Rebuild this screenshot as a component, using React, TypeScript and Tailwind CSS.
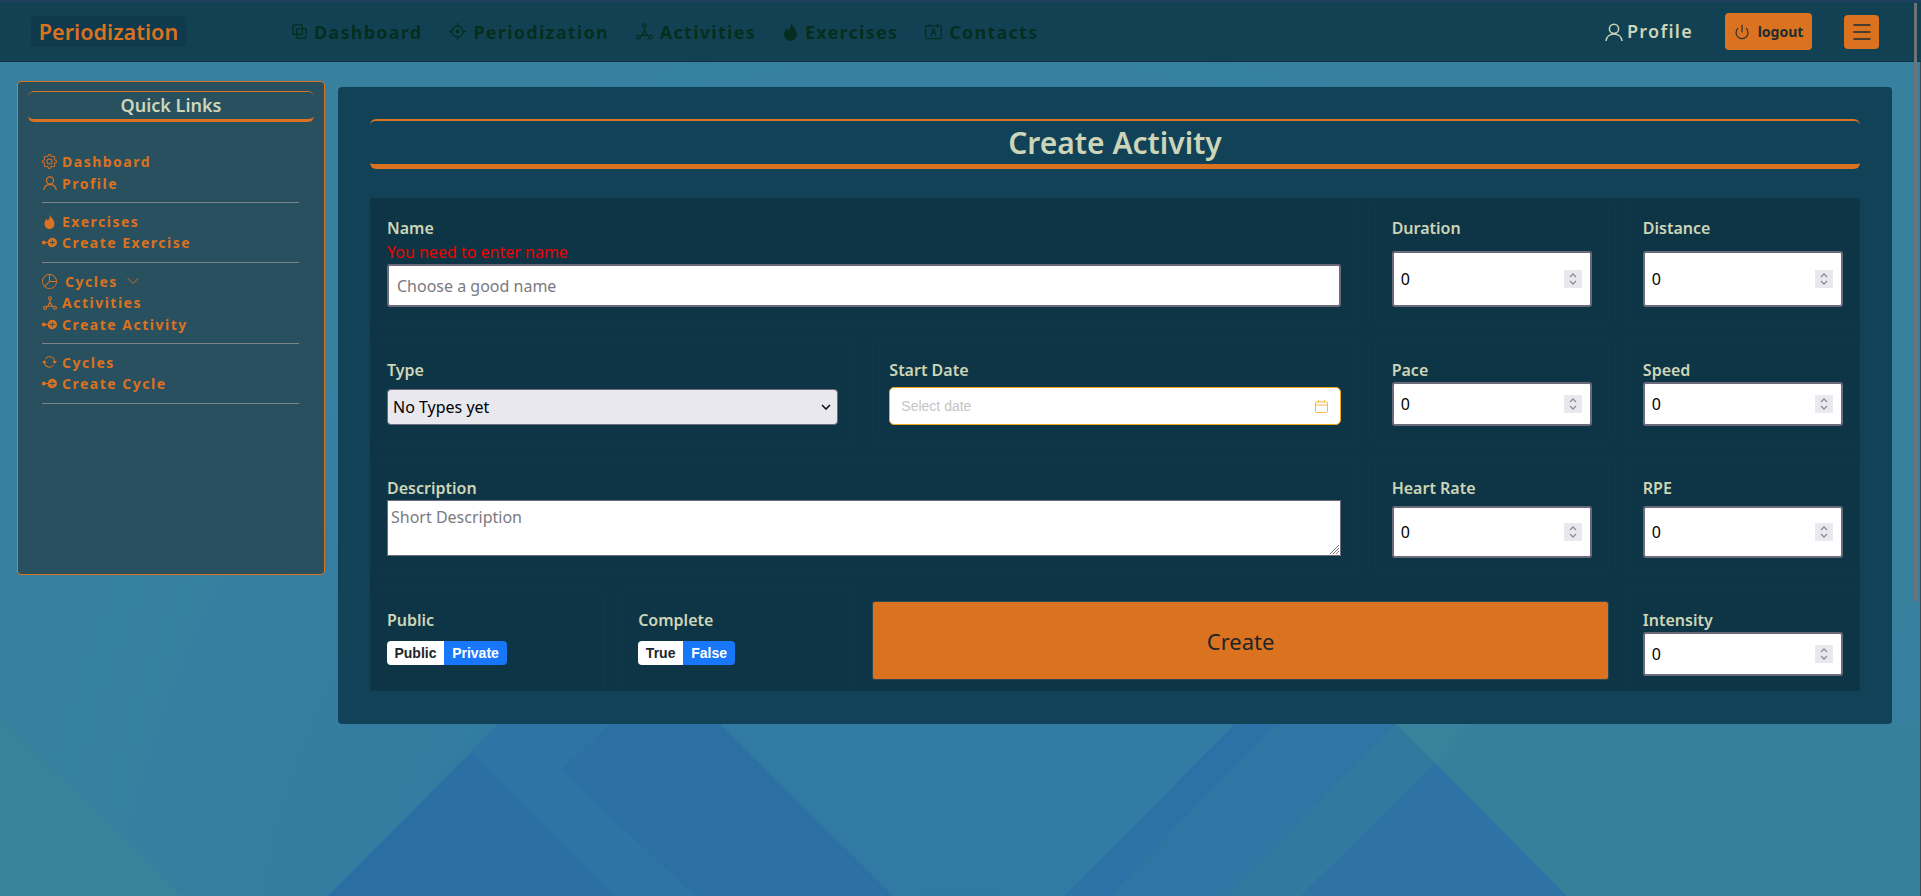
import { ChevronDown, Menu, Power } from "lucide-react";
import type { ReactNode } from "react";
import { BsArrowRepeat, BsGear, BsNodePlusFill, BsPieChart } from "react-icons/bs";

const font = "font-['Noto_Sans','Open_Sans',sans-serif]";

function SquaresIcon() {
  return (
    <svg width="15" height="15" viewBox="0 0 16 16" fill="none" stroke="currentColor" strokeWidth="1.4">
      <rect x="1" y="1" width="10" height="10" rx="1" />
      <rect x="5" y="5" width="10" height="10" rx="1" />
    </svg>
  );
}

function CrosshairIcon() {
  return (
    <svg width="17" height="17" viewBox="0 0 16 16" fill="none" stroke="currentColor" strokeWidth="1.2">
      <circle cx="8" cy="8" r="5.2" />
      <circle cx="8" cy="8" r="1.8" fill="currentColor" stroke="none" />
      <path d="M8 0 V3 M8 13 V16 M0 8 H3 M13 8 H16" />
    </svg>
  );
}

function NodesIcon({ size = 17 }: { size?: number }) {
  return (
    <svg width={size} height={size} viewBox="0 0 16 16" fill="none" stroke="currentColor" strokeWidth="1.2">
      <circle cx="8" cy="2.5" r="1.7" />
      <circle cx="2.4" cy="13.4" r="1.7" />
      <circle cx="13.6" cy="13.4" r="1.7" />
      <path d="M8 4.2 V7 M8 7 L5.4 11.6 H10.6 Z M5.4 11.6 L3.9 12.6 M10.6 11.6 L12.1 12.6" />
    </svg>
  );
}

function FlameIcon({ width = 15, height = 19 }: { width?: number; height?: number }) {
  return (
    <svg width={width} height={height} viewBox="2.6 0 10.8 16" fill="currentColor">
      <path d="M8.4 0 C8.6 3 13.4 6 13.4 10.5 A5.4 5.5 0 0 1 2.6 10.5 C2.6 8.2 3.9 6.6 4.6 5 C5.4 5.7 6 6.6 6.2 7.2 C7.6 5.4 8.9 3 8.4 0 Z" />
    </svg>
  );
}

function ContactCardIcon() {
  return (
    <svg width="17" height="17" viewBox="0 0 17 17" fill="none" stroke="currentColor" strokeWidth="1.2">
      <rect x="0.8" y="3" width="15.4" height="12.6" />
      <path d="M4.5 1 V4.5 M12.5 1 V4.5" />
      <circle cx="8.5" cy="7.6" r="1.4" />
      <path d="M5.8 13.4 L7.4 9.6 H9.6 L11.2 13.4" />
    </svg>
  );
}

function PersonIcon({ size }: { size: number }) {
  return (
    <svg width={size} height={size} viewBox="0 0 18 18" fill="none" stroke="currentColor" strokeWidth="1.5">
      <circle cx="9" cy="5.8" r="4.6" />
      <path d="M1 18 C1.5 13.4 5 11 9 11 C13 11 16.5 13.4 17 18" />
    </svg>
  );
}

function NavLink({ icon, label }: { icon: ReactNode; label: string }) {
  return (
    <a className="flex items-center gap-[7px] text-[18px] font-bold leading-[24px] tracking-[1.25px] text-[#042f1e]">
      {icon}
      {label}
    </a>
  );
}

function SideLink({ icon, label }: { icon: ReactNode; label: string }) {
  return (
    <a className="flex h-[21.4px] items-center gap-[5px] text-[14px] font-bold tracking-[1.5px] text-[#db7220]">
      <span className="flex w-[15px] justify-center">{icon}</span>
      {label}
    </a>
  );
}

function Divider() {
  return <hr className="my-[8px] border-0 border-t-[1px] border-[#7d8588]" />;
}

function TitleBar({ children, className }: { children: ReactNode; className?: string }) {
  return (
    <div className={`rounded-[6px] border-x-0 border-solid border-[#db7220] text-center font-semibold text-[#cdd5b8] ${className ?? ""}`}>
      {children}
    </div>
  );
}

function Cell({ span, children }: { span: string; children: ReactNode }) {
  return <div className={`rounded-[3px] border border-[#0f3849] px-[16px] ${span}`}>{children}</div>;
}

function Label({ children, className }: { children: ReactNode; className?: string }) {
  return <label className={`block text-[16px] font-semibold leading-[24px] text-[#cdd5b8] ${className ?? ""}`}>{children}</label>;
}

function NumberBox({ h, className }: { h: string; className?: string }) {
  return (
    <div className={`flex items-center justify-between rounded-[3px] border-2 border-[#6b6b7c] bg-white pl-[7px] pr-[8px] ${h} ${className ?? ""}`}>
      <span className="text-[16px] text-black">0</span>
      <span className="flex h-[18px] w-[18px] flex-col items-center justify-center bg-[#e8e8ee]">
        <svg width="10" height="14" viewBox="0 0 10 14" fill="none" stroke="#8b8b96" strokeWidth="1.3">
          <path d="M2 5 L5 2 L8 5" />
          <path d="M2 9 L5 12 L8 9" />
        </svg>
      </span>
    </div>
  );
}

export default function App() {
  return (
    <div className={`relative h-[896px] w-[1921px] overflow-hidden bg-[radial-gradient(ellipse_at_50%_115%,#3079a4_0%,#337ca1_40%,#37819f_75%)] ${font}`}>
      {/* background shapes */}
      <svg className="absolute inset-0" width="1921" height="896" viewBox="0 0 1921 896">
        <polygon points="0,717 182,896 0,896" fill="#38829b" />
        <polygon points="608,612 893,896 328,896" fill="#2e74a4" />
        <polygon points="561,770 610,724 720,724 893,896 695,896" fill="#2c70a4" />
        <polygon points="472,753 615,896 328,896" fill="#2b6ea3" />
        <polygon points="1235,724 1396,724 1226,896 1065,896" fill="#2f76a4" />
        <polygon points="1235,724 1276,724 1109,896 1065,896" fill="#2d72a6" />
        <polygon points="1396,724 1470,724 1921,724 1921,896 1567,896" fill="#37809c" />
        <polygon points="1396,724 1470,724 1435,763" fill="#38829b" />
        <polygon points="1435,763 1567,896 1300,896" fill="#2e73a3" />
        <polygon points="1396,724 1435,763 1300,896 1226,896" fill="#32799f" />
      </svg>

      <div className="relative flex h-full flex-col">
        <nav className="flex h-[62px] items-center border-t-[2px] border-b-[1px] border-t-[#1e3f5f] border-b-[#0e3344] bg-[#134154] pl-[31px] pr-[42px]">
          <a className="flex h-[31px] w-[155px] items-center justify-center rounded-[4px] bg-[#0f3a4e] text-[21.6px] font-semibold leading-none text-[#db7220]">
            Periodization
          </a>
          <div className="ml-[106px] flex items-center gap-[27px]">
            <NavLink icon={<SquaresIcon />} label="Dashboard" />
            <NavLink icon={<CrosshairIcon />} label="Periodization" />
            <NavLink icon={<NodesIcon />} label="Activities" />
            <NavLink icon={<FlameIcon />} label="Exercises" />
            <NavLink icon={<ContactCardIcon />} label="Contacts" />
          </div>
          <div className="ml-auto flex items-center">
            <a className="flex items-center gap-[4px] text-[18px] font-semibold tracking-[1.3px] text-[#cdd5b8]">
              <PersonIcon size={18} />
              Profile
            </a>
            <button className="ml-[32px] flex h-[37px] w-[87px] items-center justify-center gap-[8px] rounded-[4px] bg-[#db7220] text-[14px] font-bold text-[#1c2d30]">
              <Power className="h-[16px] w-[16px]" strokeWidth={1.6} />
              logout
            </button>
            <button className="ml-[32px] flex h-[34px] w-[35px] items-center justify-center rounded-[4px] bg-[#db7220] text-[#1c2d30]">
              <Menu className="h-[24px] w-[24px]" strokeWidth={1.5} />
            </button>
          </div>
        </nav>

        <div className="flex items-start gap-[13px] pl-[17px] pt-[19px]">
          <aside className="h-[494px] w-[308px] rounded-[4px] border border-[#db7220] bg-[#29505f] px-[10px] pt-[9px]">
            <TitleBar className="flex h-[31px] items-center justify-center border-t-[1px] border-b-[3px] text-[18px]">
              Quick Links
            </TitleBar>
            <div className="pl-[14px] pr-[15px] pt-[29px]">
              <SideLink icon={<BsGear className="h-[15px] w-[15px]" />} label="Dashboard" />
              <SideLink icon={<PersonIcon size={14} />} label="Profile" />
              <Divider />
              <SideLink icon={<FlameIcon width={13} height={15} />} label="Exercises" />
              <SideLink icon={<BsNodePlusFill className="h-[15px] w-[15px]" />} label="Create Exercise" />
              <Divider />
              <div className="flex h-[21.4px] items-center text-[14px] font-bold tracking-[1.5px] text-[#db7220]">
                <span className="flex w-[15px] justify-center">
                  <BsPieChart className="h-[15px] w-[15px]" />
                </span>
                <span className="ml-[8px]">Cycles</span>
                <ChevronDown className="ml-[5px] h-[20px] w-[20px]" strokeWidth={1.1} />
              </div>
              <SideLink icon={<NodesIcon size={14} />} label="Activities" />
              <SideLink icon={<BsNodePlusFill className="h-[15px] w-[15px]" />} label="Create Activity" />
              <Divider />
              <SideLink icon={<BsArrowRepeat className="h-[16px] w-[16px]" />} label="Cycles" />
              <SideLink icon={<BsNodePlusFill className="h-[15px] w-[15px]" />} label="Create Cycle" />
              <Divider />
            </div>
          </aside>

          <main className="mt-[6px] h-[637px] w-[1554px] rounded-[4px] bg-[#114257] px-[32px] pt-[32px]">
            <TitleBar className="flex h-[50px] items-center justify-center border-t-[2px] border-b-[5px] text-[30px]">
              Create Activity
            </TitleBar>

            <form className="mt-[29px] grid h-[493px] grid-cols-12 grid-rows-[125px_101px_115px_101px] gap-x-[17px] gap-y-[17px] bg-[#0e3545]">
              <Cell span="col-span-8">
                <Label className="pt-[17px]">Name</Label>
                <div className="text-[16px] leading-[24px] text-[#f00000]">You need to enter name</div>
                <div className="flex h-[43px] items-center rounded-[3px] border-2 border-[#6b6b7c] bg-white pl-[8px] text-[16px] text-[#7a7a80]">
                  Choose a good name
                </div>
              </Cell>
              <Cell span="col-span-2">
                <Label className="pt-[17px]">Duration</Label>
                <NumberBox h="h-[56px]" className="mt-[11px]" />
              </Cell>
              <Cell span="col-span-2">
                <Label className="pt-[17px]">Distance</Label>
                <NumberBox h="h-[56px]" className="mt-[11px]" />
              </Cell>

              <Cell span="col-span-4">
                <Label className="pt-[17px]">Type</Label>
                <div className="mt-[7px] flex h-[36px] items-center justify-between rounded-[4px] border border-[#6b6b7c] bg-[#e8e8ee] pl-[5px] pr-[6px] text-[16px] text-black">
                  No Types yet
                  <svg width="10" height="6" viewBox="0 0 10 6" fill="none" stroke="#111" strokeWidth="1.6">
                    <path d="M1 1 L5 5 L9 1" />
                  </svg>
                </div>
              </Cell>
              <Cell span="col-span-4">
                <Label className="pt-[17px]">Start Date</Label>
                <div className="mt-[5px] flex h-[38px] items-center justify-between rounded-[5px] border border-[#f0a818] bg-white pl-[11px] pr-[12px] font-['Liberation_Sans',sans-serif] text-[14px] text-[#c4c4c4]">
                  Select date
                  <svg width="13" height="13" viewBox="0 0 13 13" fill="none" stroke="#f6b73c" strokeWidth="1">
                    <rect x="0.5" y="2" width="12" height="10.5" rx="1" />
                    <path d="M0.5 5 H12.5 M3.5 0 V2 M9.5 0 V2" />
                  </svg>
                </div>
              </Cell>
              <Cell span="col-span-2">
                <Label className="pt-[17px]">Pace</Label>
                <NumberBox h="h-[44px]" />
              </Cell>
              <Cell span="col-span-2">
                <Label className="pt-[17px]">Speed</Label>
                <NumberBox h="h-[44px]" />
              </Cell>

              <Cell span="col-span-8">
                <Label className="pt-[17px]">Description</Label>
                <div className="relative h-[56px] border border-[#6b6b7c] bg-white pl-[3px] pt-[4px] text-[16px] leading-[24px] text-[#7a7a80]">
                  Short Description
                  <svg className="absolute bottom-[1px] right-[1px]" width="10" height="10" viewBox="0 0 10 10" stroke="#777" strokeWidth="1">
                    <path d="M1 10 L10 1 M4 10 L10 4 M7 10 L10 7" />
                  </svg>
                </div>
              </Cell>
              <Cell span="col-span-2">
                <Label className="pt-[17px]">Heart Rate</Label>
                <NumberBox h="h-[52px]" className="mt-[6px]" />
              </Cell>
              <Cell span="col-span-2">
                <Label className="pt-[17px]">RPE</Label>
                <NumberBox h="h-[52px]" className="mt-[6px]" />
              </Cell>

              <Cell span="col-span-2">
                <Label className="pt-[17px]">Public</Label>
                <div className="mt-[9px] flex h-[24px] w-[120px] overflow-hidden rounded-[4px] font-['Liberation_Sans',sans-serif] text-[14px] font-bold">
                  <span className="flex w-[57px] items-center justify-center bg-white text-[#212529]">Public</span>
                  <span className="flex flex-1 items-center justify-center bg-[#1877f8] text-white">Private</span>
                </div>
              </Cell>
              <Cell span="col-span-2">
                <Label className="pt-[17px]">Complete</Label>
                <div className="mt-[9px] flex h-[24px] w-[97px] overflow-hidden rounded-[4px] font-['Liberation_Sans',sans-serif] text-[14px] font-bold">
                  <span className="flex w-[45px] items-center justify-center bg-white text-[#212529]">True</span>
                  <span className="flex flex-1 items-center justify-center bg-[#1877f8] text-white">False</span>
                </div>
              </Cell>
              <div className="col-span-6 pt-[11px]">
                <button type="button" className="h-[79px] w-full rounded-[3px] border border-[#2a4a50] bg-[#db7220] pt-[1px] text-[22px] text-[#212529]">
                  Create
                </button>
              </div>
              <Cell span="col-span-2">
                <Label className="pt-[17px]">Intensity</Label>
                <NumberBox h="h-[44px]" />
              </Cell>
            </form>
          </main>
        </div>
      </div>

      {/* browser scrollbar */}
      <div className="absolute right-[4px] top-[3px] h-[598px] w-[3px] bg-[#6b7479]" />
      <div className="absolute right-0 top-[62px] h-[834px] w-[1px] bg-[#3a4a50]" />
    </div>
  );
}
